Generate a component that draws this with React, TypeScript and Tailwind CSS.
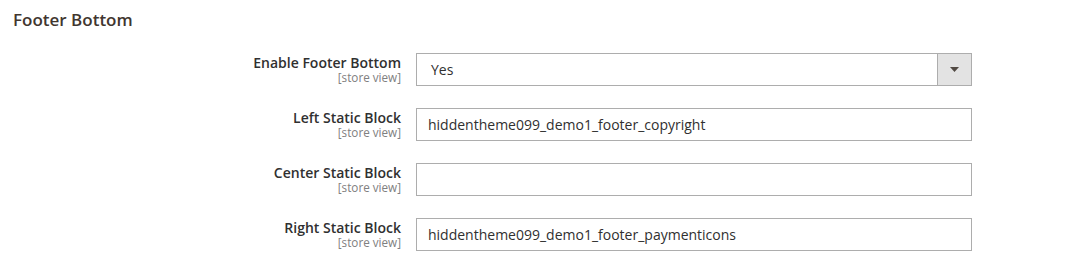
import React from "react";

const font = { fontFamily: '"Open Sans", "Noto Sans", sans-serif' };

function Row({ label, children }: { label: string; children: React.ReactNode }) {
  return (
    <div className="flex items-start">
      <div className="w-[401px] shrink-0 text-right pt-[1px]">
        <div className="text-[14px] leading-[17px] font-semibold text-[#303030]">{label}</div>
        <div className="text-[11.7px] leading-[13px] text-[#808080]">[store view]</div>
      </div>
      <div className="ml-[15px] w-[556px]">{children}</div>
    </div>
  );
}

function TextInput({ value }: { value: string }) {
  return (
    <div className="h-[33px] border border-[#adadad] bg-white flex items-center pl-[11px] text-[14px] text-[#303030]">
      {value}
    </div>
  );
}

export default function App() {
  return (
    <div className="w-[1091px] h-[269px] bg-white" style={font}>
      <div className="pl-[13px] pt-[8px] text-[17px] leading-[23px] font-semibold text-[#41362f]">
        Footer Bottom
      </div>
      <div className="mt-[22px] flex flex-col gap-[22px]">
        <Row label="Enable Footer Bottom">
          <div className="h-[33px] border border-[#adadad] bg-white flex items-stretch">
            <div className="flex-1 flex items-center pl-[14px] text-[14px] text-[#303030]">Yes</div>
            <div className="w-[34px] border-l border-[#adadad] bg-[#e3e3e3] flex items-center justify-center">
              <svg width="9" height="5" viewBox="0 0 9 5">
                <polygon points="0,0 9,0 4.5,5" fill="#514943" />
              </svg>
            </div>
          </div>
        </Row>
        <Row label="Left Static Block">
          <TextInput value="hiddentheme099_demo1_footer_copyright" />
        </Row>
        <Row label="Center Static Block">
          <TextInput value="" />
        </Row>
        <Row label="Right Static Block">
          <TextInput value="hiddentheme099_demo1_footer_paymenticons" />
        </Row>
      </div>
    </div>
  );
}
